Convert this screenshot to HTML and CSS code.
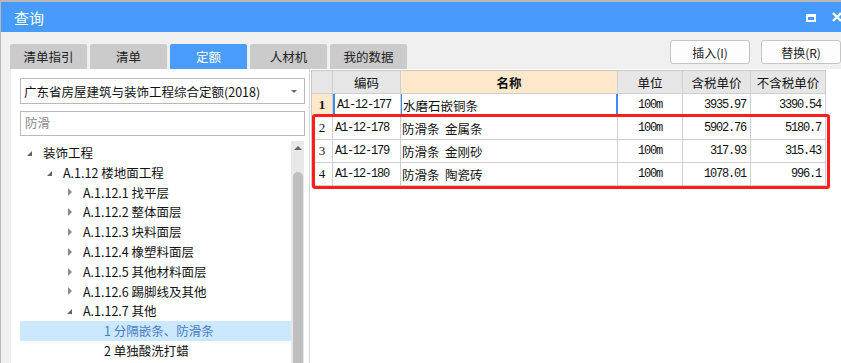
FILE: index.html
```html
<!DOCTYPE html>
<html lang="zh">
  <head>
    <meta charset="UTF-8">
    <title>查询</title>
    <link rel="stylesheet" href="styles.css">
  </head>
  <body>
    <div class="window">

      <div class="titlebar">
        <span class="title">查询</span>
        <span class="win-max"></span>
        <svg class="win-close" width="12" height="10" viewBox="0 0 12 10">
          <path d="M1 1 L9 9 M9 1 L1 9" stroke="#fff" stroke-width="2.4" fill="none"/>
        </svg>
      </div>

      <div class="toolbar">
        <div class="tabs">
          <div class="tab">清单指引</div>
          <div class="tab">清单</div>
          <div class="tab active">定额</div>
          <div class="tab">人材机</div>
          <div class="tab">我的数据</div>
        </div>
        <div class="actions">
          <button class="btn">插入(I)</button>
          <button class="btn">替换(R)</button>
        </div>
      </div>

      <div class="main">

        <div class="left-panel">
          <div class="select">
            <span>广东省房屋建筑与装饰工程综合定额(2018)</span>
            <span class="caret"></span>
          </div>
          <div class="search">防滑</div>

          <div class="tree-box">
            <ul class="tree">
              <li class="node lv1"><span class="open"></span>装饰工程</li>
              <li class="node lv2"><span class="open"></span>A.1.12 楼地面工程</li>
              <li class="node lv3"><span class="closed"></span>A.1.12.1 找平层</li>
              <li class="node lv3"><span class="closed"></span>A.1.12.2 整体面层</li>
              <li class="node lv3"><span class="closed"></span>A.1.12.3 块料面层</li>
              <li class="node lv3"><span class="closed"></span>A.1.12.4 橡塑料面层</li>
              <li class="node lv3"><span class="closed"></span>A.1.12.5 其他材料面层</li>
              <li class="node lv3"><span class="closed"></span>A.1.12.6 踢脚线及其他</li>
              <li class="node lv3"><span class="open"></span>A.1.12.7 其他</li>
              <li class="node lv4 selected">1 分隔嵌条、防滑条</li>
              <li class="node lv4">2 单独酸洗打蜡</li>
            </ul>
            <div class="scrollbar">
              <span class="arrow-up"></span>
              <div class="thumb"></div>
            </div>
          </div>
        </div>

        <div class="right-panel">
          <div class="grid-wrap">
            <table class="grid">
              <thead>
                <tr>
                  <th class="c-idx"></th>
                  <th class="c-code">编码</th>
                  <th class="c-name focus-col">名称</th>
                  <th class="c-unit">单位</th>
                  <th class="c-price">含税单价</th>
                  <th class="c-net">不含税单价</th>
                </tr>
              </thead>
              <tbody>
                <tr class="current">
                  <td class="idx">1</td>
                  <td class="code">A1-12-177</td>
                  <td class="name">水磨石嵌铜条</td>
                  <td class="unit">100m</td>
                  <td class="num">3935.97</td>
                  <td class="num">3390.54</td>
                </tr>
                <tr>
                  <td class="idx">2</td>
                  <td class="code">A1-12-178</td>
                  <td class="name">防滑条&nbsp;&nbsp;金属条</td>
                  <td class="unit">100m</td>
                  <td class="num">5902.76</td>
                  <td class="num">5180.7</td>
                </tr>
                <tr>
                  <td class="idx">3</td>
                  <td class="code">A1-12-179</td>
                  <td class="name">防滑条&nbsp;&nbsp;金刚砂</td>
                  <td class="unit">100m</td>
                  <td class="num">317.93</td>
                  <td class="num">315.43</td>
                </tr>
                <tr>
                  <td class="idx">4</td>
                  <td class="code">A1-12-180</td>
                  <td class="name">防滑条&nbsp;&nbsp;陶瓷砖</td>
                  <td class="unit">100m</td>
                  <td class="num">1078.01</td>
                  <td class="num">996.1</td>
                </tr>
              </tbody>
            </table>
            <div class="red-box"></div>
          </div>
        </div>

      </div>
    </div>
  </body>
</html>
```

FILE: styles.css
```css
body {
  margin: 0;
  background: #b8b8b8;
  font-family: "Noto Sans CJK SC", sans-serif;
  font-size: 12px;
  color: #111;
  overflow: hidden;
}

.window {
  margin: 2px 0 0 1px;
  width: 840px;
  height: 361px;
  background: #f0f0f0;
  overflow: hidden;
}

.titlebar {
  height: 30px;
  background: #479bfc;
  display: flex;
  align-items: center;
  color: #fff;
}

.title {
  margin-left: 13px;
  font-size: 15px;
  flex: auto;
}

.win-max {
  width: 6px;
  height: 3px;
  border: 2px solid #fff;
  border-top-width: 3px;
  margin-right: 16px;
  margin-top: 1px;
}

.win-close {
  margin-right: -3px;
}

.toolbar {
  display: flex;
  height: 37px;
}

.tabs {
  display: flex;
  align-self: flex-end;
  margin-left: 9px;
  gap: 3px;
}

.tab {
  width: 77px;
  height: 25px;
  line-height: 25px;
  text-align: center;
  background: #cbcbcb;
  border-radius: 2px 2px 0 0;
  font-size: 12.5px;
  color: #222;
}

.tab.active {
  background: #4a9cfd;
  color: #fff;
}

.actions {
  margin-left: auto;
  margin-top: 8px;
  display: flex;
  gap: 11px;
}

.btn {
  width: 80px;
  height: 24px;
  padding: 0;
  background: #fdfdfd;
  border: 1px solid #c4c4c4;
  border-radius: 3px;
  font-family: "Noto Sans CJK SC", sans-serif;
  font-size: 12px;
  color: #222;
}

.main {
  display: flex;
  height: 294px;
}

.left-panel {
  margin-left: 10px;
  width: 299px;
  background: #fff;
  border-right: 1px solid #d6d6d6;
  padding: 9px 0 0 9px;
  box-sizing: border-box;
}

.select {
  width: 285px;
  height: 26px;
  box-sizing: border-box;
  border: 1px solid #b9b9b9;
  display: flex;
  align-items: center;
  padding-left: 3px;
  font-size: 12.5px;
  white-space: nowrap;
}

.caret {
  margin-left: auto;
  margin-right: 7px;
  border-left: 3px solid transparent;
  border-right: 3px solid transparent;
  border-top: 3px solid #666;
}

.search {
  margin-top: 7px;
  width: 285px;
  height: 25px;
  box-sizing: border-box;
  border: 1px solid #b9b9b9;
  padding-left: 4px;
  line-height: 22px;
  font-size: 12.5px;
  color: #8a8a8a;
}

.tree-box {
  margin-top: 5px;
  display: flex;
  height: 260px;
}

.tree {
  list-style: none;
  margin: 0;
  padding: 2px 0 0 0;
  width: 271px;
}

.node {
  height: 19.8px;
  line-height: 19.8px;
  font-size: 12.5px;
  white-space: nowrap;
  display: flex;
  align-items: center;
}

.lv1 { padding-left: 7px; }
.lv2 { padding-left: 27px; }
.lv3 { padding-left: 47px; }
.lv4 { padding-left: 84px; }

.open,
.closed {
  width: 16px;
  height: 10px;
  position: relative;
}

.open::before {
  content: "";
  position: absolute;
  left: 0;
  top: 3px;
  border-left: 5px solid transparent;
  border-bottom: 5px solid #646464;
}

.closed::before {
  content: "";
  position: absolute;
  left: 1px;
  top: 1px;
  border-top: 4px solid transparent;
  border-bottom: 4px solid transparent;
  border-left: 4px solid #8a8a8a;
}

.node.selected {
  background: #cce8ff;
  color: #4a7cc4;
}

.scrollbar {
  width: 13px;
  background: #e8e8e8;
  display: flex;
  flex-direction: column;
  align-items: center;
}

.arrow-up {
  margin-top: 5px;
  border-left: 4px solid transparent;
  border-right: 4px solid transparent;
  border-bottom: 4px solid #666;
}

.thumb {
  margin-top: 22px;
  width: 10px;
  flex: auto;
  background: #bfbfbf;
  border-radius: 5px 5px 0 0;
}

.right-panel {
  flex: auto;
  background: #fff;
  padding: 1px 0 0 1px;
}

.grid-wrap {
  position: relative;
}

.grid {
  border-collapse: separate;
  border-spacing: 0;
  table-layout: fixed;
  width: 515px;
  border-left: 1px solid #c9c9c9;
  border-top: 1px solid #c9c9c9;
}

.grid th,
.grid td {
  box-sizing: border-box;
  height: 23px;
  padding: 0;
  border-right: 1px solid #cfcfcf;
  border-bottom: 1px solid #cfcfcf;
  white-space: nowrap;
  overflow: hidden;
}

.grid th {
  background: #e6e6e6;
  font-weight: normal;
  font-size: 12.5px;
}

.grid th.focus-col {
  background: #fde8cb;
  font-weight: bold;
}

.c-idx { width: 21px; }
.c-code { width: 68px; }
.c-name { width: 217px; }
.c-unit { width: 65px; }
.c-price { width: 68px; }
.c-net { width: 75px; }

.grid td.idx {
  text-align: center;
  font-family: "Liberation Serif", serif;
  font-size: 13px;
}

.grid td.code {
  padding-left: 2px;
  font-family: "Liberation Mono", monospace;
  font-size: 12px;
  letter-spacing: -1.2px;
}

.grid td.name {
  padding-left: 1px;
  font-size: 12.5px;
}

.grid td.unit,
.grid td.num {
  font-family: "Liberation Mono", monospace;
  font-size: 12px;
  letter-spacing: -1.2px;
}

.grid td.unit {
  text-align: center;
}

.grid td.num {
  text-align: right;
  padding-right: 4px;
}

.current td.idx {
  background: #fde8cb;
  font-weight: bold;
}

.current td.code {
  border-left: 2px solid #3c8cf2;
}

.current td.name {
  border-left: 1px solid #3c8cf2;
  border-right: 2px solid #3c8cf2;
}

.red-box {
  position: absolute;
  left: 1px;
  top: 44px;
  width: 518px;
  height: 75px;
  box-sizing: border-box;
  border: 3px solid #fe1d1d;
  border-radius: 3px;
}
```
